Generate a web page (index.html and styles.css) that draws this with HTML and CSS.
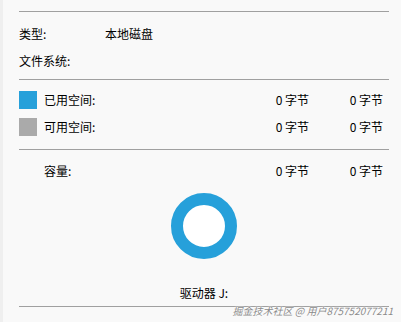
FILE: index.html
```html
<!DOCTYPE html>
<html lang="zh-CN">
<head>
    <meta charset="UTF-8">
    <meta name="viewport" content="width=device-width, initial-scale=1.0">
    <title>驱动器属性</title>
    <link rel="stylesheet" href="styles.css">
</head>
<body>
    <div class="panel">
        <div class="divider"></div>

        <!-- General info -->
        <div class="section info">
            <div class="row">
                <span class="label">类型:</span>
                <span class="value">本地磁盘</span>
            </div>
            <div class="row">
                <span class="label">文件系统:</span>
                <span class="value"></span>
            </div>
        </div>

        <div class="divider"></div>

        <!-- Space usage -->
        <div class="section usage">
            <div class="row space-row">
                <span class="swatch used"></span>
                <span class="space-label">已用空间:</span>
                <span class="bytes">0 字节</span>
                <span class="bytes">0 字节</span>
            </div>
            <div class="row space-row">
                <span class="swatch free"></span>
                <span class="space-label">可用空间:</span>
                <span class="bytes">0 字节</span>
                <span class="bytes">0 字节</span>
            </div>
        </div>

        <div class="divider"></div>

        <!-- Capacity -->
        <div class="section capacity">
            <div class="row space-row">
                <span class="swatch blank"></span>
                <span class="space-label">容量:</span>
                <span class="bytes">0 字节</span>
                <span class="bytes">0 字节</span>
            </div>
            <div class="chart">
                <div class="ring"></div>
            </div>
            <div class="row drive-name">驱动器 J:</div>
        </div>

        <div class="divider"></div>
    </div>

    <div class="watermark">掘金技术社区 @ 用户875752077211</div>
</body>
</html>
```

FILE: styles.css
```css
html, body {
    margin: 0;
    height: 100%;
}

body {
    font-family: "Noto Sans CJK SC", "Noto Sans", sans-serif;
    font-size: 12px;
    color: #000;
    background-color: #f9f9f9;
    border-left: 3px solid #efefef;
    box-sizing: border-box;
    position: relative;
    overflow: hidden;
}

.panel {
    width: 370px;
    margin-left: 16px;
    padding-top: 11px;
}

.divider {
    height: 1px;
    background-color: #a0a0a0;
}

.row {
    height: 27px;
    display: flex;
    align-items: center;
}

.info {
    padding: 8px 0 5px;
}

.info .label {
    width: 86px;
}

.usage {
    padding: 6px 0 9px;
}

.space-row {
    display: grid;
    grid-template-columns: 25px 1fr 60px 74px;
    align-items: center;
}

.swatch {
    width: 18px;
    height: 18px;
}

.swatch.used {
    background-color: #26a0da;
}

.swatch.free {
    background-color: #aaaaaa;
}

.swatch.blank {
    background: none;
}

.bytes {
    text-align: right;
    padding-right: 6px;
}

.capacity {
    padding-top: 7px;
}

.chart {
    display: flex;
    justify-content: center;
    margin-top: 9px;
}

.ring {
    width: 42px;
    height: 42px;
    border: 12px solid #26a0da;
    border-radius: 50%;
    background-color: #fff;
}

.drive-name {
    justify-content: center;
    margin-top: 20px;
}

.watermark {
    position: absolute;
    right: 8px;
    bottom: 4px;
    font-size: 10px;
    font-style: italic;
    color: #8a8a8a;
    text-shadow: 0 0 2px #fff, 0 0 1px #fff;
}
```
